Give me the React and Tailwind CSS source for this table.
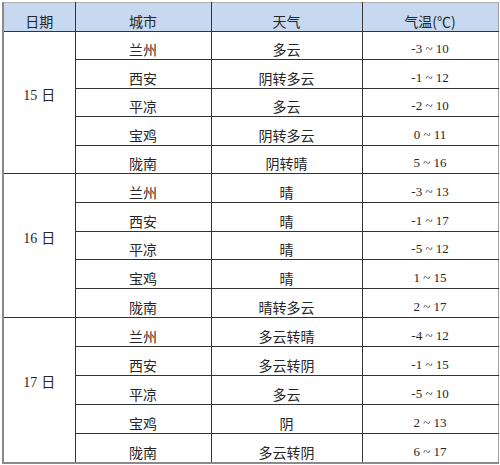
import React from "react";

const groups = [
  {
    date: "15",
    rows: [
      ["兰州", "多云", "-3 ~ 10", 28],
      ["西安", "阴转多云", "-1 ~ 12", 29],
      ["平凉", "多云", "-2 ~ 10", 28],
      ["宝鸡", "阴转多云", "0 ~ 11", 29],
      ["陇南", "阴转晴", "5 ~ 16", 28],
    ],
  },
  {
    date: "16",
    rows: [
      ["兰州", "晴", "-3 ~ 13", 29],
      ["西安", "晴", "-1 ~ 17", 29],
      ["平凉", "晴", "-5 ~ 12", 28],
      ["宝鸡", "晴", "1 ~ 15", 29],
      ["陇南", "晴转多云", "2 ~ 17", 29],
    ],
  },
  {
    date: "17",
    rows: [
      ["兰州", "多云转晴", "-4 ~ 12", 29],
      ["西安", "多云转阴", "-1 ~ 15", 29],
      ["平凉", "多云", "-5 ~ 10", 29],
      ["宝鸡", "阴", "2 ~ 13", 29],
      ["陇南", "多云转阴", "6 ~ 17", 29],
    ],
  },
];

const cjk = { fontFamily: '"Noto Sans CJK SC", "Noto Sans", sans-serif' };
const serif = { fontFamily: '"Liberation Serif", "Noto Sans CJK SC", serif' };

export default function App() {
  return (
    <div className="bg-white w-[500px] h-[465px] pl-[2px] pt-[2px]">
      <table
        className="w-[495px] border-collapse table-fixed text-[#262626] text-[14px] leading-[16px]"
        style={cjk}
      >
        <colgroup>
          <col className="w-[72px]" />
          <col className="w-[136px]" />
          <col className="w-[151px]" />
          <col className="w-[136px]" />
        </colgroup>
        <thead>
          <tr className="h-[29px] bg-[#c6d9f0]">
            <th className="font-normal text-center align-bottom pb-[2px] border-t border-t-[#b0b0b0] border-l-2 border-l-[#8a8a8a] border-b border-b-[#333] border-r border-r-[#333]">
              日期
            </th>
            <th className="font-normal text-center align-bottom pb-[2px] border-t border-t-[#b0b0b0] border-b border-b-[#333] border-r border-r-[#333]">
              城市
            </th>
            <th className="font-normal text-center align-bottom pb-[2px] border-t border-t-[#b0b0b0] border-b border-b-[#333] border-r border-r-[#333]">
              天气
            </th>
            <th className="font-normal text-center align-bottom pb-[2px] border-t border-t-[#b0b0b0] border-b border-b-[#333] border-r border-r-[#a0a0a0]">
              气温(℃)
            </th>
          </tr>
        </thead>
        <tbody>
          {groups.map((g, gi) =>
            g.rows.map((r, ri) => {
              const last = gi === 2 && ri === 4;
              const bb = last ? "border-b-2 border-b-[#8a8a8a]" : "border-b border-b-[#333]";
              return (
                <tr key={gi + "-" + ri} style={{ height: r[3] }}>
                  {ri === 0 && (
                    <td
                      rowSpan={5}
                      className={
                        "text-center align-middle pb-[16px] border-l-2 border-l-[#8a8a8a] border-r border-r-[#333] " +
                        (gi === 2 ? "border-b-2 border-b-[#8a8a8a]" : "border-b border-b-[#333]")
                      }
                    >
                      <span style={serif} className="text-[14px]">{g.date}</span>
                      <span className="ml-[4px]">日</span>
                    </td>
                  )}
                  <td className={"text-center align-bottom pb-[2px] border-r border-r-[#333] " + bb}>
                    {r[0]}
                  </td>
                  <td className={"text-center align-bottom pb-[2px] border-r border-r-[#333] " + bb}>
                    {r[1]}
                  </td>
                  <td
                    className={"text-center align-bottom pb-[2px] border-r border-r-[#a0a0a0] " + bb}
                    style={serif}
                  >
                    <span className="text-[13px]">{r[2]}</span>
                  </td>
                </tr>
              );
            })
          )}
        </tbody>
      </table>
    </div>
  );
}
